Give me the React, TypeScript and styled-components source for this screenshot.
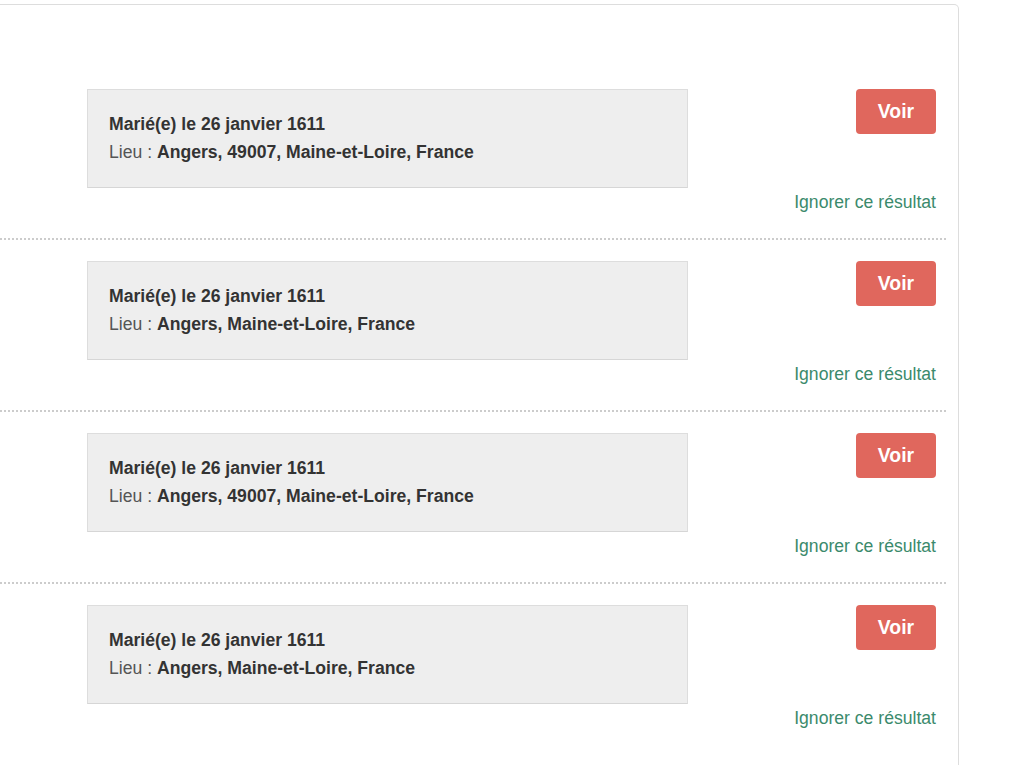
import React from "react";
import styled, { createGlobalStyle } from "styled-components";

const GlobalStyle = createGlobalStyle`
  html, body { margin: 0; padding: 0; background: #ffffff; }
  body { font-family: "Liberation Sans", Arial, sans-serif; color: #333333; }
`;

const Card = styled.div`
  box-sizing: border-box;
  width: 959px;
  margin-top: 4px;
  min-height: 770px;
  background: #ffffff;
  border: 1px solid #dddddd;
  border-left: none;
  border-radius: 0 5px 0 0;
  padding: 63px 12px 0 0;
`;

const Row = styled.div`
  padding: 21px 10px 22px 87px;
  border-bottom: 2px dotted #cccccc;
  &:last-child { border-bottom: none; }
`;

const Top = styled.div`
  display: flex;
  justify-content: space-between;
  align-items: flex-start;
`;

const InfoBox = styled.div`
  box-sizing: border-box;
  width: 601px;
  height: 99px;
  padding: 20px 21px;
  background: #eeeeee;
  border: 1px solid #dddddd;
  border-bottom-color: #d6d6d6;
  font-size: 17.6px;
  line-height: 28px;
`;

const Title = styled.div`
  font-weight: bold;
  color: #333333;
`;

const Line = styled.div`
  color: #555555;
`;

const Strong = styled.strong`
  color: #333333;
`;

const Button = styled.button`
  box-sizing: border-box;
  width: 80px;
  height: 45px;
  border: none;
  border-radius: 4px;
  background: #e0675d;
  color: #ffffff;
  font-family: "Liberation Sans", Arial, sans-serif;
  font-weight: bold;
  font-size: 19.4px;
  cursor: pointer;
  padding: 0;
`;

const Footer = styled.div`
  text-align: right;
  font-size: 17.6px;
  line-height: 28px;
`;

const Link = styled.a`
  color: #3b8a6c;
  text-decoration: none;
`;

const results = [
  "Angers, 49007, Maine-et-Loire, France",
  "Angers, Maine-et-Loire, France",
  "Angers, 49007, Maine-et-Loire, France",
  "Angers, Maine-et-Loire, France",
];

export default function App() {
  return (
    <>
      <GlobalStyle />
      <Card>
        {results.map((place, i) => (
          <Row key={i}>
            <Top>
              <InfoBox>
                <Title>Marié(e) le 26 janvier 1611</Title>
                <Line>
                  Lieu : <Strong>{place}</Strong>
                </Line>
              </InfoBox>
              <Button>Voir</Button>
            </Top>
            <Footer>
              <Link href="#">Ignorer ce résultat</Link>
            </Footer>
          </Row>
        ))}
      </Card>
    </>
  );
}
